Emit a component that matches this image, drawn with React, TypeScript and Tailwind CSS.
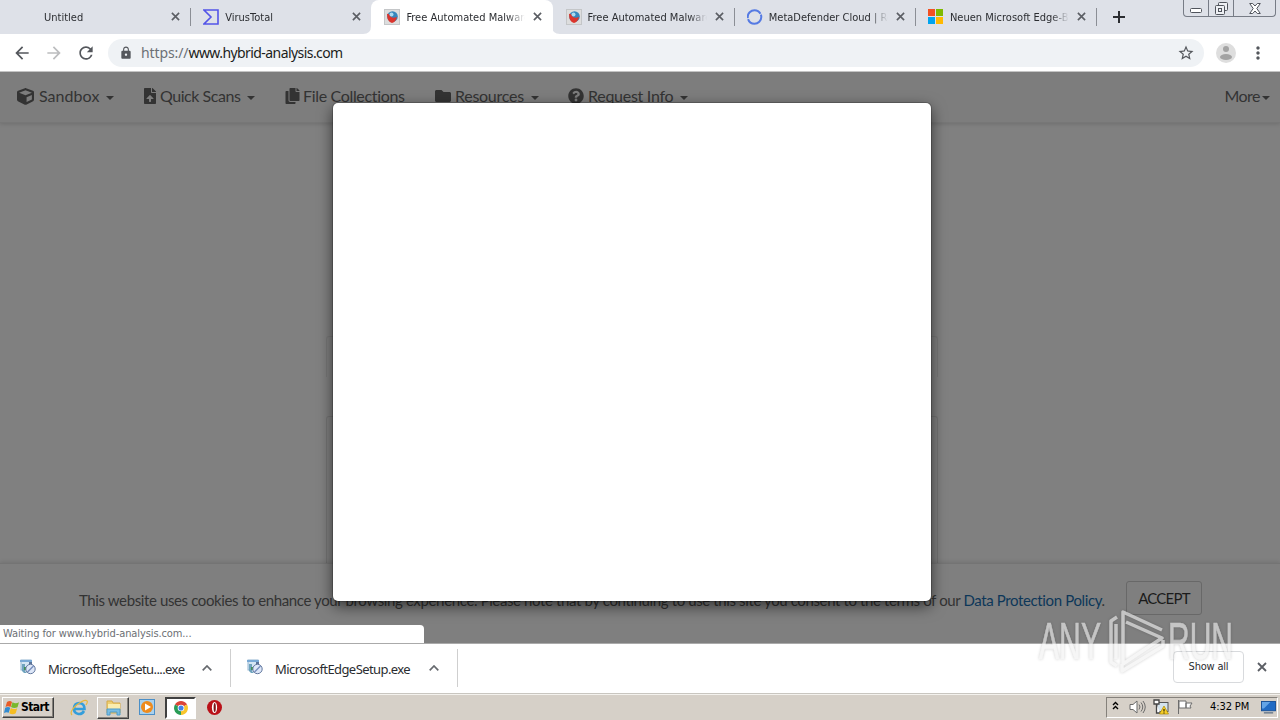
import type { ReactNode } from "react";
import { FaCopy, FaCube, FaFileUpload, FaFolder, FaQuestionCircle } from "react-icons/fa";
import { MdArrowBack, MdArrowForward, MdLock, MdMoreVert, MdRefresh, MdStarBorder } from "react-icons/md";

export default function App() {
  return (
    <div className="relative flex h-[720px] w-[1280px] flex-col overflow-hidden bg-white font-['DejaVu_Sans_Condensed','DejaVu_Sans',sans-serif] text-[#2b2d31]">
      <TabStrip />
      <Toolbar />
      <Page />
      <Downloads />
      <Taskbar />
      <Watermark />
    </div>
  );
}

function TabStrip() {
  return (
    <header className="flex h-[34px] shrink-0 bg-[#dee1e8] pl-[9px]">
      <Tab title="Untitled" />
      <Tab title="VirusTotal" icon={<VirusTotalIcon />} divider />
      <Tab title="Free Automated Malware" icon={<HybridIcon />} active />
      <Tab title="Free Automated Malware" icon={<HybridIcon />} />
      <Tab title="MetaDefender Cloud | Ro" icon={<MetaIcon />} divider />
      <Tab title="Neuen Microsoft Edge-Br" icon={<MicrosoftIcon />} divider />
      <div className="my-2 w-px bg-[#8b8e95]" />
      <svg className="mt-[11px] ml-[16px] size-3 shrink-0" viewBox="0 0 12 12" fill="#2b2d31"><path d="M5 0h2v5h5v2H7v5H5V7H0V5h5z" /></svg>
      <div className="mr-[4px] ml-auto grid h-[17px] w-[93px] grid-cols-[25px_25px_1fr] rounded-b-[4px] border border-t-0 border-[#777c86] text-[#50545c]">
        <div className="flex justify-center border-r border-[#777c86]">
          <svg className="mt-2 h-[5px] w-3" viewBox="0 0 12 5"><rect x=".5" y=".5" width="11" height="4" rx="1" fill="#fff" stroke="currentColor" /></svg>
        </div>
        <div className="flex justify-center border-r border-[#777c86]">
          <svg className="mt-[2px] size-[13px]" viewBox="0 0 13 13" fill="#eef0f4" stroke="currentColor">
            <rect x="3.5" y=".5" width="9" height="8" rx="1" />
            <rect x=".5" y="3.5" width="9" height="9" rx="1" />
            <rect x="3.5" y="6.5" width="3" height="3" />
          </svg>
        </div>
        <div className="flex justify-center">
          <svg className="mt-[3px] h-[11px] w-3" viewBox="0 0 12 11" fill="#fff" stroke="currentColor">
            <path d="M.7.5h3L6 3 8.300.5h3L7.800 5.500l3.500 5h-3L6 8l-2.300 2.500h-3l3.500-5z" />
          </svg>
        </div>
      </div>
    </header>
  );
}

function Tab({ title, icon, active, divider }: { title: string; icon?: ReactNode; active?: boolean; divider?: boolean }) {
  return (
    <div className={active ? "relative flex w-[181.200px] shrink-0 rounded-t-[8px] bg-white" : "relative flex w-[181.200px] shrink-0"}>
      {active && (
        <svg className="absolute bottom-0 -left-2 h-2 w-[197px]" viewBox="0 0 197 8" fill="#fff">
          <path d="M0 8q8 0 8-8v8zM197 8q-8 0-8-8v8z" />
        </svg>
      )}
      <div className={divider ? "my-2 w-px shrink-0 bg-[#8b8e95]" : "w-px shrink-0"} />
      <div className="mt-[9px] ml-3 size-4 shrink-0">{icon}</div>
      <div className="mt-[9px] ml-[6px] w-[119px] overflow-hidden text-[11px] leading-[17px] tracking-[0.01px] whitespace-nowrap [mask-image:linear-gradient(to_right,#000_85%,transparent_100%)]">{title}</div>
      <CloseIcon className="mt-[12px] ml-[8px] size-[9px] shrink-0" />
    </div>
  );
}

function Toolbar() {
  return (
    <div className="flex h-[38px] shrink-0 items-center border-b border-[#c4c4c4] bg-white text-[#54575c]">
      <MdArrowBack className="ml-[12px] size-5" />
      <MdArrowForward className="ml-[12px] size-5 text-[#bcbdbf]" />
      <MdRefresh className="ml-[12px] size-5" />
      <div className="ml-[12px] flex h-7 w-[1096px] items-center rounded-full bg-[#eff2f5]">
        <MdLock className="ml-[11px] size-[14px]" />
        <div className="ml-[8px] font-['Noto_Sans',sans-serif] text-[14px] leading-5 text-[#1b1d20]">
          <span className="tracking-[-0.1px] text-[#6c7075]">https://</span>
          <span className="tracking-[-0.570px]">www.hybrid-analysis.com</span>
        </div>
        <MdStarBorder className="mr-[9px] ml-auto size-[18px]" />
      </div>
      <svg className="ml-[12px] size-5" viewBox="0 0 20 20">
        <circle cx="10" cy="10" r="10" fill="#dedede" />
        <circle cx="10" cy="6" r="3" fill="#a3a3a3" />
        <ellipse cx="10" cy="14" rx="6" ry="3" fill="#a3a3a3" />
      </svg>
      <MdMoreVert className="ml-[12px] size-5" />
    </div>
  );
}

function Page() {
  return (
    <main className="relative flex h-[571px] shrink-0 flex-col overflow-hidden bg-[#808080] font-['Lato',sans-serif] text-[#333]">
      <nav className="flex h-[51px] shrink-0 items-center border-b border-[#777] bg-[#7d7d7d] pb-[2px] pl-[17px] text-[16px] shadow-[0_1px_4px_rgba(0,0,0,0.15)]">
        <NavItem className="w-[126px]" icon={<FaCube className="size-[17px]" />} label="Sandbox" gap="ml-[5px] tracking-[0.05px]" caret />
        <NavItem className="w-[142px]" icon={<FaFileUpload className="h-4 w-[14px]" />} label="Quick Scans" gap="ml-[3px] tracking-[-0.450px]" caret />
        <NavItem className="w-[150px]" icon={<FaCopy className="h-4 w-[15px]" />} label="File Collections" gap="ml-[3px] tracking-[-0.330px]" />
        <NavItem className="w-[133px]" icon={<FaFolder className="size-[16px]" />} label="Resources" gap="ml-[4px] tracking-[-0.270px]" caret />
        <NavItem className="w-[130px]" icon={<FaQuestionCircle className="size-[16px]" />} label="Request Info" gap="ml-[4px] tracking-[-0.280px]" caret />
        <div className="mr-[10px] ml-auto flex items-center">
          <span className="tracking-[-0.5px]">More</span>
          <Caret className="ml-[2px]" />
        </div>
      </nav>
      <div className="ml-[326px] w-[612px]">
        <div className="mt-[213px] h-[41px] rounded-t-[3px] border border-b-0 border-[#777]" />
        <div className="mt-[39px] h-[147px] rounded-t-[3px] border border-b-0 border-[#747474]" />
      </div>
      <footer className="flex h-[80px] shrink-0 border-t border-[#747474] bg-[#7f7f7f] pl-[79px] shadow-[0_-1px_4px_rgba(0,0,0,0.12)]">
        <p className="mt-[24px] w-[1047px] text-[15px] leading-6 tracking-[-0.380px] whitespace-nowrap">
          This website uses cookies to enhance your browsing experience. Please note that by continuing to use this site you consent to the terms of our{" "}
          <a className="text-[#0d3759]">Data Protection Policy</a>.
        </p>
        <button className="mt-[17px] h-[34px] w-[76px] rounded-[3px] border border-[#686868] text-[15px] tracking-[-0.8px] text-[#1b1b1b]">ACCEPT</button>
      </footer>
      <div className="absolute top-[31px] left-[333px] h-[498px] w-[598px] rounded-[5px] bg-white shadow-[0_5px_15px_rgba(0,0,0,0.6),0_0_0_1px_rgba(0,0,0,0.2)]" />
      <div className="absolute bottom-0 left-0 h-[18px] w-[424px] rounded-tr-[4px] bg-white pl-[3px] font-['DejaVu_Sans_Condensed',sans-serif] text-[11px] leading-[18px] tracking-[-0.1px] text-[#6c6f74]">
        Waiting for www.hybrid-analysis.com...
      </div>
    </main>
  );
}

function NavItem({ icon, label, gap, caret, className }: { icon: ReactNode; label: string; gap: string; caret?: boolean; className: string }) {
  return (
    <div className={`flex shrink-0 items-center whitespace-nowrap ${className}`}>
      {icon}
      <span className={gap}>{label}</span>
      {caret && <Caret className="ml-[7px]" />}
    </div>
  );
}

function Caret({ className }: { className: string }) {
  return <svg className={`mt-[3px] h-1 w-2 ${className}`} viewBox="0 0 8 4" fill="currentColor"><path d="M0 0h8L4 4z" /></svg>;
}

function CloseIcon({ className }: { className: string }) {
  return (
    <svg className={className} viewBox="0 0 10 10" fill="none" stroke="#5b5e64" strokeWidth="1.800">
      <path d="m1 1 8 8M9 1 1 9" />
    </svg>
  );
}

function Downloads() {
  return (
    <section className="flex h-[50px] shrink-0 items-center border-t border-[#aaa] bg-white font-['Noto_Sans',sans-serif] text-[13px]">
      <Download name="MicrosoftEdgeSetu....exe" className="w-[231px] pl-5" />
      <Download name="MicrosoftEdgeSetup.exe" className="w-[227px] pl-4" />
      <button className="mr-[13px] mb-[3px] ml-auto h-[32px] w-[71px] rounded-[4px] border border-[#d8dadd] font-['DejaVu_Sans_Condensed',sans-serif] text-[11px] tracking-[-0.2px]">Show all</button>
      <CloseIcon className="mr-[13px] mb-[3px] size-[10px]" />
    </section>
  );
}

function Download({ name, className }: { name: string; className: string }) {
  return (
    <div className={`mb-px flex h-[38px] items-center border-r border-[#cfcfcf] ${className}`}>
      <InstallerIcon />
      <span className="mt-[3px] w-[138px] tracking-[-0.580px] whitespace-nowrap">{name}</span>
      <svg className="ml-[16px] h-[6px] w-[10px]" viewBox="0 0 10 6" fill="none" stroke="#66696e" strokeWidth="1.700"><path d="m.7 5.300L5 1l4.300 4.300" /></svg>
    </div>
  );
}

function Taskbar() {
  return (
    <footer className="flex h-[27px] shrink-0 items-center border-t border-[#c9c6c0] bg-[#d6d0c8] shadow-[inset_0_1px_0_#f4f2ee]">
      <button className="mt-px ml-[2px] flex h-[21px] w-[52px] items-center border border-t-white border-r-[#404040] border-b-[#404040] border-l-white pl-px font-['DejaVu_Sans_Condensed',sans-serif] text-[12px] font-bold text-black shadow-[inset_-1px_-1px_0_#85817b]">
        <WindowsIcon />
        <span className="-mt-px tracking-[-0.550px]">Start</span>
      </button>
      <div className="mt-px ml-[16px] flex size-[18px]"><ExplorerIcon /></div>
      <div className="mt-px ml-[9px] flex h-[22px] w-[32px] items-center justify-center border border-t-white border-r-[#404040] border-b-[#404040] border-l-white shadow-[inset_-1px_-1px_0_#85817b]"><FolderIcon /></div>
      <div className="ml-[10px] flex"><PlayerIcon /></div>
      <div className="mt-px ml-[10px] flex h-[22px] w-[31px] items-center justify-center border-2 border-t-[#404040] border-r-white border-b-white border-l-[#404040] bg-white"><ChromeIcon /></div>
      <div className="mt-px ml-[11px] flex"><OperaIcon /></div>
      <div className="mr-[2px] ml-auto flex h-[21px] w-[172px] items-center border border-t-[#85817b] border-r-white border-b-white border-l-[#85817b] text-[11px] text-black">
        <svg className="mb-[3px] ml-[5px] h-[9px] w-[7px]" viewBox="0 0 7 9" fill="none" stroke="#000" strokeWidth="1.400"><path d="m1 4 2.500-2.500L6 4M1 8l2.500-2.500L6 8" /></svg>
        <svg className="ml-[10px] h-4 w-[17px]" viewBox="0 0 17 16" fill="none" stroke="#6b6b6b">
          <path d="M1 5.500h3L8 2v12l-4-3.500H1z" fill="#fff" />
          <path d="M10 5.500q2 2.500 0 5M12 3.500q3.500 4.500 0 9M14 2q4.500 6 0 12" />
        </svg>
        <NetworkIcon />
        <svg className="ml-[8px] h-4 w-4" viewBox="0 0 16 16" fill="#fff" stroke="#6d6d6d">
          <path d="M1.500 1v14M2 2h7v7H2zM9 4h6l-2 3 1 2H9z" />
        </svg>
        <span className="mt-px ml-[17px] w-[39px] tracking-[-0.1px] whitespace-nowrap">4:32 PM</span>
        <svg className="ml-[12px] h-[13px] w-[15px]" viewBox="0 0 16 14">
          <rect x=".5" y=".5" width="15" height="10" fill="#216bc4" stroke="#174f96" />
          <path d="M1 1h9L3 8H1z" fill="#63a4e7" />
          <path d="M3 12h10v1.500H3z" fill="#66788c" />
        </svg>
      </div>
    </footer>
  );
}

function Watermark() {
  return (
    <svg className="absolute top-[604px] left-[1030px] h-[74px] w-[210px] drop-shadow-[0_0_1.500px_rgba(0,0,0,0.3)]" viewBox="0 0 210 74" fill="#f1f1f1" opacity=".62">
      <g fontFamily="Liberation Sans" fontSize="51" stroke="#f1f1f1" strokeWidth=".7">
        <text x="9" y="55" textLength="62" lengthAdjust="spacingAndGlyphs">ANY</text>
        <text x="138" y="55" textLength="65" lengthAdjust="spacingAndGlyphs">RUN</text>
      </g>
      <g fill="none" stroke="#f1f1f1" strokeWidth="3.500" strokeLinejoin="round">
        <path d="M87 13l-6 4v41l6 4M86 20v35" />
        <path d="M132 26 93 8v52l39-26L96 18M92 60v7l41-25v-6" />
      </g>
    </svg>
  );
}

function VirusTotalIcon() {
  return <svg className="size-4" viewBox="0 0 16 16" fill="none" stroke="#5354e8" strokeWidth="1.600"><path d="M1 1h14v14H1l7-7z" /></svg>;
}

function HybridIcon() {
  return (
    <svg className="size-4" viewBox="0 0 16 16">
      <rect x=".5" y=".5" width="15" height="15" fill="#ddd" stroke="#c4c6c8" />
      <circle cx="8.500" cy="7.500" r="5.300" fill="#3587bd" />
      <path d="M3 5q2-1 3 2 2 3 7 1-1 5-5 6-5-1-5-9z" fill="#db352d" />
      <circle cx="7.500" cy="5.500" r="2" fill="#a9d9ef" />
    </svg>
  );
}

function MetaIcon() {
  return <svg className="size-4" viewBox="0 0 16 16" fill="none" stroke="#557ae3" strokeWidth="2"><circle cx="7.500" cy="8" r="6.800" strokeDasharray="19 1" /></svg>;
}

function MicrosoftIcon() {
  return (
    <svg className="size-4" viewBox="0 0 16 16">
      <path d="M0 0h7v7H0z" fill="#f25022" />
      <path d="M8 0h7v7H8z" fill="#7fba00" />
      <path d="M0 8h7v7H0z" fill="#00a4ef" />
      <path d="M8 8h7v7H8z" fill="#ffb900" />
    </svg>
  );
}

function InstallerIcon() {
  return (
    <svg className="mr-[12px] mb-[2px] size-4" viewBox="0 0 16 16">
      <rect x="1" y="1" width="10" height="10" fill="#d5e6f3" stroke="#93b5d2" />
      <path d="M0 1h12v2H0z" fill="#79a9d5" />
      <path d="M2 5h3v7l2 2H4l-2-2z" fill="#6fa3bd" />
      <path d="M4 8h3v3H4z" fill="#429451" />
      <circle cx="10.500" cy="10" r="4.700" fill="#dee7f8" stroke="#61779d" />
      <path d="m7.500 13 6-6" stroke="#7890bd" strokeWidth="1.500" />
      <path d="M9 3h3v2H9z" fill="#5b7398" />
    </svg>
  );
}

function WindowsIcon() {
  return (
    <svg className="mr-px size-[16px]" viewBox="0 0 16 16">
      <path d="M3 2q3-2 5 0L6.500 7Q4 5.500 1.500 7z" fill="#e85b26" />
      <path d="M8.500 2.300q3 2 6.500 0l-1.500 5Q10 9 7 7z" fill="#79b82d" />
      <path d="M1.200 7.700q3-1.500 5 0l-1.500 5Q2.500 11.500 0 13z" fill="#328bd0" />
      <path d="M6.800 8q3 2 6.400.2l-1.500 5q-3 2-6.400 0z" fill="#f5bd21" />
    </svg>
  );
}

function ExplorerIcon() {
  return (
    <svg className="size-[18px]" viewBox="0 0 18 18" fill="none">
      <path d="M14 12q-2 3.500-5.500 3Q3.500 14 4 9t5.500-5q5 .5 5 6H5" stroke="#349edb" strokeWidth="2.600" />
      <path d="M2 16Q-1 13 6 6.500 15-.5 17 2q1 1-1 4" stroke="#e8b83d" strokeWidth="1.200" />
    </svg>
  );
}

function FolderIcon() {
  return (
    <svg className="size-[17px]" viewBox="0 0 17 17">
      <path d="M2 2h5l1 2h7v10H2z" fill="#edce72" stroke="#d5a947" />
      <path d="M3 5h12v5H3z" fill="#faedaf" />
      <path d="M2 10h13v6h-3v-3H5v3H2z" fill="#78bce2" stroke="#4f9bca" />
    </svg>
  );
}

function PlayerIcon() {
  return (
    <svg className="size-4" viewBox="0 0 16 16">
      <rect x=".5" y=".5" width="15" height="15" fill="#a9d1ed" stroke="#4b8fc7" />
      <circle cx="8" cy="8" r="6" fill="#ee8b1d" />
      <path d="m6 4.500 6 3.500-6 3.500z" fill="#fff" />
    </svg>
  );
}

function ChromeIcon() {
  return (
    <svg className="size-[14px]" viewBox="0 0 16 16">
      <path d="M8 8 1.100 4A8 8 0 0 1 14.900 4z" fill="#db4437" />
      <path d="M8 8 14.900 4A8 8 0 0 1 8 16z" fill="#f8c52b" />
      <path d="M8 8v8A8 8 0 0 1 1.100 4z" fill="#299c56" />
      <circle cx="8" cy="8" r="3.800" fill="#fff" />
      <circle cx="8" cy="8" r="2.900" fill="#4281e8" />
    </svg>
  );
}

function OperaIcon() {
  return (
    <svg className="size-[15px]" viewBox="0 0 15 15">
      <circle cx="7.500" cy="7.500" r="7.500" fill="#ba1119" />
      <ellipse cx="7.500" cy="7.500" rx="2.600" ry="5.500" fill="#fff" />
      <ellipse cx="7.700" cy="7.500" rx="1.100" ry="4.500" fill="#7b1519" />
    </svg>
  );
}

function NetworkIcon() {
  return (
    <svg className="ml-[7px] size-4" viewBox="0 0 16 16">
      <rect x="4" y="3.500" width="11" height="9" fill="#d4e3ed" stroke="#555" />
      <path d="M1 1h5v4H1zM3.500 5v9H7" fill="#fff" stroke="#444" strokeWidth="1.300" />
      <path d="m11 7 4.500 8h-9z" fill="#f7ce28" stroke="#ad8a00" strokeWidth=".7" />
      <path d="M11 10v2.500m0 1v1" stroke="#000" />
    </svg>
  );
}
